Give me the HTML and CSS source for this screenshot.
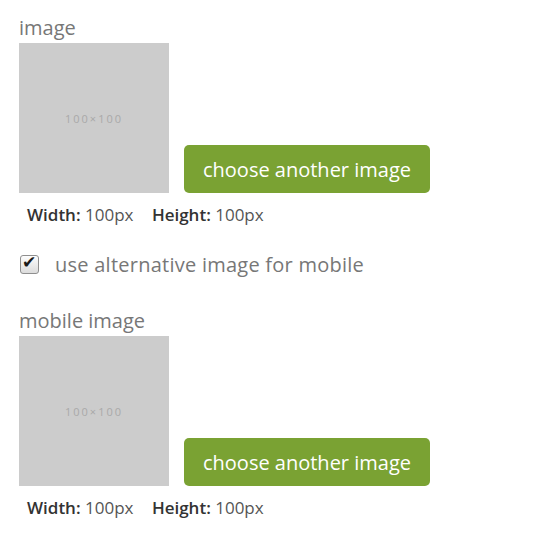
FILE: index.html
```html
<!DOCTYPE html>
<html>
<head>
<meta charset="utf-8">
<link rel="stylesheet" href="styles.css">
</head>
<body>
<div class="form">
  <section class="field">
    <div class="label">image</div>
    <div class="image-row">
      <div class="placeholder">100×100</div>
      <button class="btn">choose another image</button>
    </div>
    <div class="dims"><b>Width:</b> 100px <b class="h">Height:</b> 100px</div>
  </section>
  <label class="check">
    <input type="checkbox" checked>
    <span>use alternative image for mobile</span>
  </label>
  <section class="field">
    <div class="label">mobile image</div>
    <div class="image-row">
      <div class="placeholder">100×100</div>
      <button class="btn">choose another image</button>
    </div>
    <div class="dims"><b>Width:</b> 100px <b class="h">Height:</b> 100px</div>
  </section>
</div>
</body>
</html>
```

FILE: styles.css
```css
html, body {
  margin: 0;
  padding: 0;
  background: #fff;
}
body {
  font-family: "Open Sans", "Noto Sans", sans-serif;
}
.form {
  padding: 14px 0 0 19px;
  display: flex;
  flex-direction: column;
}
.label {
  font-size: 20px;
  line-height: 28px;
  color: #777;
  height: 29px;
}
.image-row {
  display: flex;
  align-items: flex-end;
  gap: 15px;
}
.placeholder {
  width: 150px;
  height: 150px;
  background: #cccccc;
  color: #a9a9a9;
  font-size: 11px;
  letter-spacing: 2px;
  display: flex;
  align-items: center;
  justify-content: center;
}
.btn {
  font-family: inherit;
  font-size: 20px;
  color: #fff;
  background: #7aa233;
  border: none;
  border-radius: 5px;
  height: 48px;
  width: 246px;
  padding: 0;
}
.dims {
  margin: 10px 0 0 8px;
  font-size: 17px;
  line-height: 24px;
  color: #555;
}
.dims b {
  color: #333;
  font-weight: 600;
}
.dims .h {
  margin-left: 14px;
}
.check {
  display: flex;
  align-items: center;
  gap: 16px;
  margin: 21px 0 0 1px;
  height: 32px;
  font-size: 20px;
  letter-spacing: 0.25px;
  color: #777;
}
.check input {
  appearance: none;
  -webkit-appearance: none;
  position: relative;
  width: 19px;
  height: 19px;
  margin: 0;
  border: 1px solid #8f8f8f;
  border-radius: 3px;
  background: linear-gradient(#fdfdfd, #dcdcdc);
}
.check input:checked::after {
  content: "✔";
  position: absolute;
  left: 1px;
  top: -4px;
  font-family: "DejaVu Sans", sans-serif;
  font-size: 17px;
  color: #1a1a1a;
}
.field + .check + .field {
  margin-top: 27px;
}
```
